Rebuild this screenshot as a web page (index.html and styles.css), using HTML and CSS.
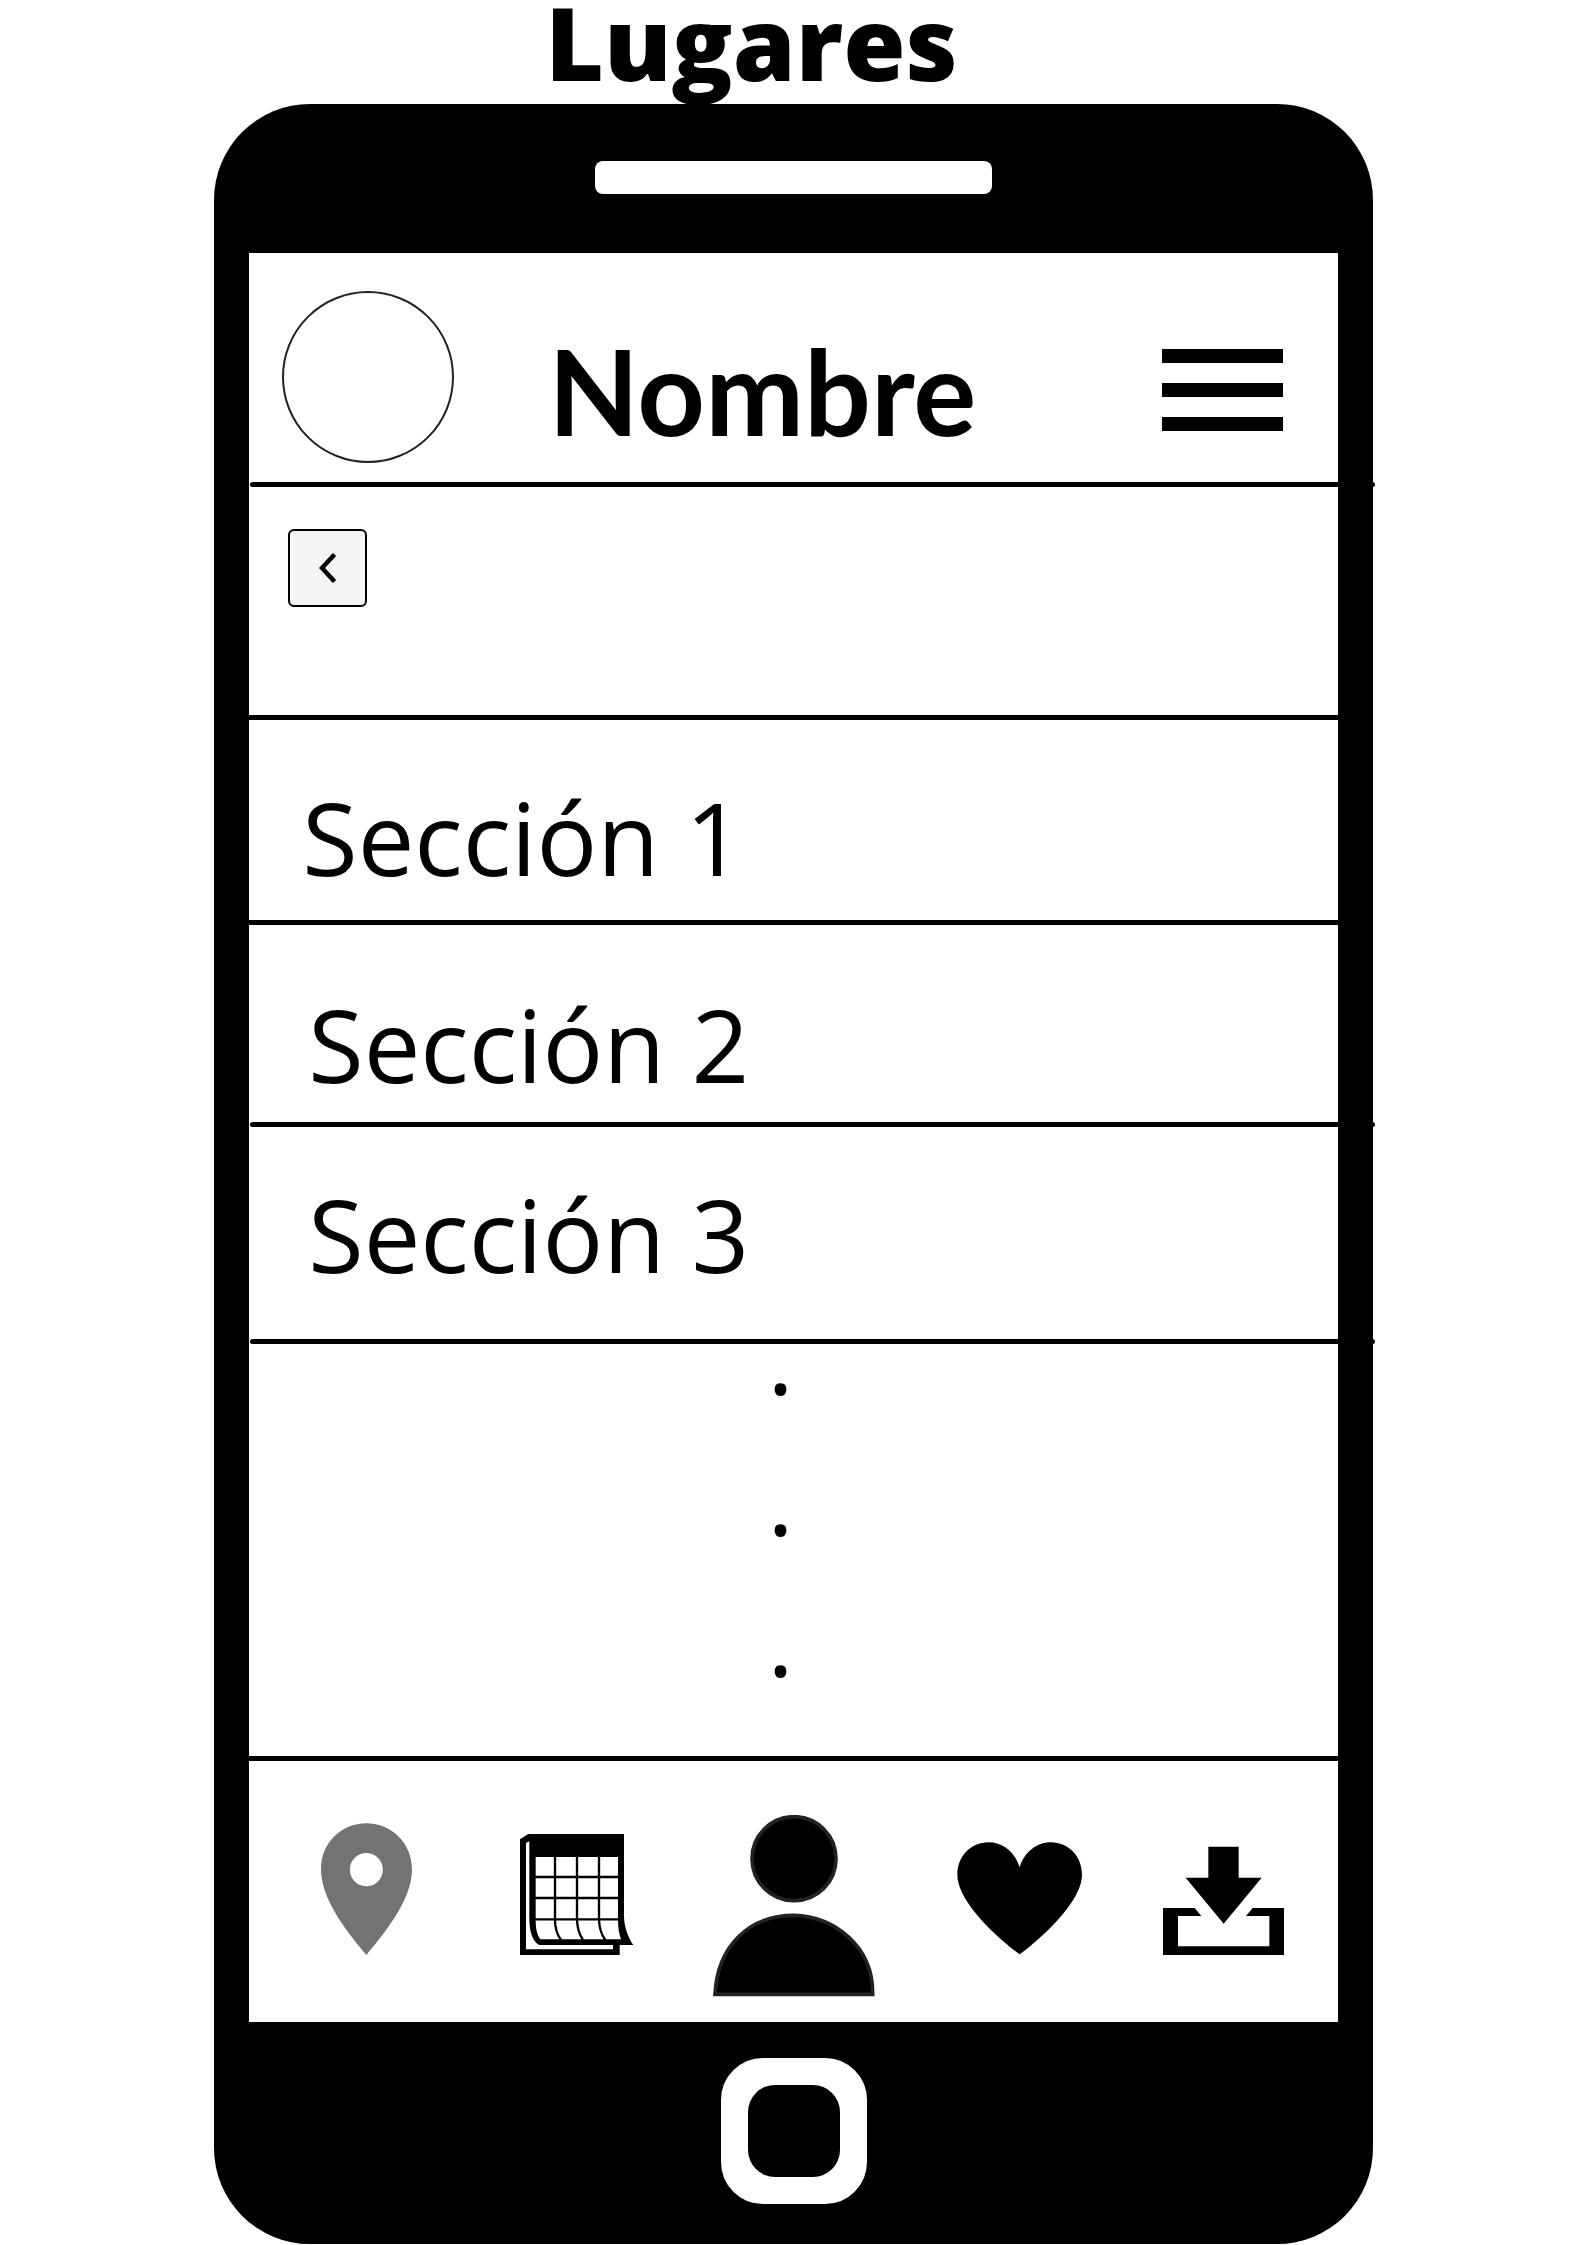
FILE: index.html
```html
<!DOCTYPE html>
<html lang="es">
<head>
<meta charset="utf-8">
<meta name="viewport" content="width=device-width, initial-scale=1">
<title>Lugares</title>
<link rel="stylesheet" href="styles.css">
</head>
<body>
<h1 class="page-title">Lugares</h1>
<div class="phone">
  <div class="speaker"></div>
  <div class="screen">
    <header class="topbar">
      <div class="avatar"></div>
      <h2 class="name">Nombre</h2>
      <button class="menu" type="button" aria-label="Menú"><span class="bar"></span><span class="bar"></span><span class="bar"></span></button>
    </header>
    <hr class="rule rule-long">
    <div class="toolbar">
      <button class="back" type="button" aria-label="Volver">
        <svg width="18" height="32" viewBox="0 0 18 32"><path d="M15.500 2.500 3 16l12.500 13.500" fill="none" stroke="#000" stroke-width="4.500"/></svg>
      </button>
    </div>
    <hr class="rule">
    <main class="sections">
      <a class="section" href="#s1">Sección 1</a>
      <hr class="rule">
      <a class="section section-inset" href="#s2">Sección 2</a>
      <hr class="rule rule-long">
      <a class="section section-inset section-even" href="#s3">Sección 3</a>
      <hr class="rule rule-long">
      <div class="more"><span>.</span><span>.</span><span>.</span></div>
    </main>
    <hr class="rule">
    <nav class="tabs">
      <button class="tab" type="button" aria-label="Lugares">
        <svg width="127" height="182" viewBox="72 105 381 546"><path fill="#737373" fill-rule="evenodd" d="M262 130C186 130 126 190 126 268C126 350 190 440 262 525C334 440 399 350 399 268C399 190 338 130 262 130ZM262 219a49.500 50 0 1 1 0 100a49.500 50 0 1 1 0-100Z"/></svg>
      </button>
      <button class="tab" type="button" aria-label="Calendario">
        <svg width="120" height="182" viewBox="699 105 360 546" overflow="visible">
          <path fill-rule="evenodd" d="M723 178 748 162H1035V410C1036 440 1046 470 1063 495H1022V525H723ZM741 189V508H1002V495H780C758 482 751 450 751 415V184Z"/>
          <path fill="#fff" d="M770 231H1017V420C1017 442 1020 462 1026 478H784C774 465 770 445 770 420Z"/>
          <path fill="none" stroke="#000" stroke-width="7" d="M768 291H1020M768 354H1020M768 418H1020M828 230V420C828 445 835 465 846 480M894 230V420C895 445 902 465 912 480M960 230V420C961 445 968 465 979 480"/>
        </svg>
      </button>
      <button class="tab" type="button" aria-label="Perfil">
        <svg width="162" height="182" viewBox="159 105 486 546"><g stroke="#222" stroke-width="11"><circle cx="402" cy="236" r="126"/><path d="M165 643C172 500 265 406 402 406C520 410 640 495 638 643Z"/></g></svg>
      </button>
      <button class="tab" type="button" aria-label="Favoritos">
        <svg width="125" height="182" viewBox="81 105 375 546" overflow="visible"><path d="M272 262C258 217 222 187 178 187C126 187 85 229 85 284C85 355 178 452 272 523C366 452 459 355 459 284C459 229 418 187 366 187C322 187 286 217 272 262Z"/></svg>
      </button>
      <button class="tab" type="button" aria-label="Descargas">
        <svg width="121" height="182" viewBox="696 105 363 546"><path d="M832 200H923V293H992L878 431 764 293H832ZM696 384H791L811 408H741V499H1015V408H945L965 384H1059V525H696Z"/></svg>
      </button>
    </nav>
  </div>
  <button class="home" type="button" aria-label="Inicio"></button>
</div>
</body>
</html>
```
FILE: styles.css
```css
* {
  box-sizing: border-box;
}

body {
  margin: 0;
  background: #fff;
  color: #000;
  font-family: "Open Sans", "Noto Sans", sans-serif;
}

button {
  padding: 0;
  border: 0;
  background: none;
  cursor: pointer;
}

svg {
  display: block;
}

.page-title {
  margin: 0 0 20px;
  padding-right: 84px;
  font-size: 101px;
  font-weight: 800;
  line-height: 84px;
  text-align: center;
}

.phone {
  display: flex;
  flex-direction: column;
  align-items: center;
  width: 73%;
  margin: 0 auto;
  padding: 57px 35px 40px;
  border-radius: 96px;
  background: #000;
}

.speaker {
  width: 397px;
  max-width: 60%;
  height: 33px;
  margin-bottom: 59px;
  border-radius: 8px;
  background: #fff;
}

.screen {
  width: 100%;
  background: #fff;
}

.rule {
  height: 5px;
  margin: 0;
  border: 0;
  background: #000;
}

/* Dividers that run on past the phone's right edge */
.rule-long {
  margin: 0 -37px 0 1px;
  border-radius: 3px;
}

.topbar {
  display: flex;
  align-items: flex-start;
  padding: 38px 55px 19px 33px;
}

.avatar {
  width: 172px;
  height: 172px;
  border: 2px solid #222;
  border-radius: 50%;
}

.name {
  margin: 31px 0 0 94px;
  font-family: Lato, sans-serif;
  font-size: 118px;
  font-weight: 700;
  line-height: 138px;
}

.menu {
  display: flex;
  flex-direction: column;
  gap: 20px;
  width: 121px;
  margin: 58px 0 0 auto;
}

.bar {
  height: 14px;
  background: #000;
}

.toolbar {
  padding: 42px 39px 108px;
}

.back {
  display: flex;
  align-items: center;
  justify-content: center;
  width: 79px;
  height: 78px;
  border: 2px solid #000;
  border-radius: 6px;
  background: #f5f5f5;
}

.section {
  display: block;
  padding: 48px 53px 14px;
  color: inherit;
  font-size: 101px;
  line-height: 138px;
  text-decoration: none;
}

.section-inset {
  padding: 50px 59px 9px;
}

.section-even {
  padding-top: 38px;
  padding-bottom: 36px;
}

.more {
  display: flex;
  flex-direction: column;
  align-items: center;
  gap: 117px;
  padding: 0 26px 106px 0;
  font-size: 101px;
  line-height: 24px;
}

.tabs {
  display: flex;
  justify-content: space-between;
  padding: 54px 54px 25px;
}

.home {
  width: 146px;
  height: 146px;
  margin-top: 36px;
  border: 27px solid #fff;
  border-radius: 42px;
  background: #fff;
}

.home::before {
  content: "";
  display: block;
  height: 92px;
  border-radius: 27px;
  background: #000;
}
```
